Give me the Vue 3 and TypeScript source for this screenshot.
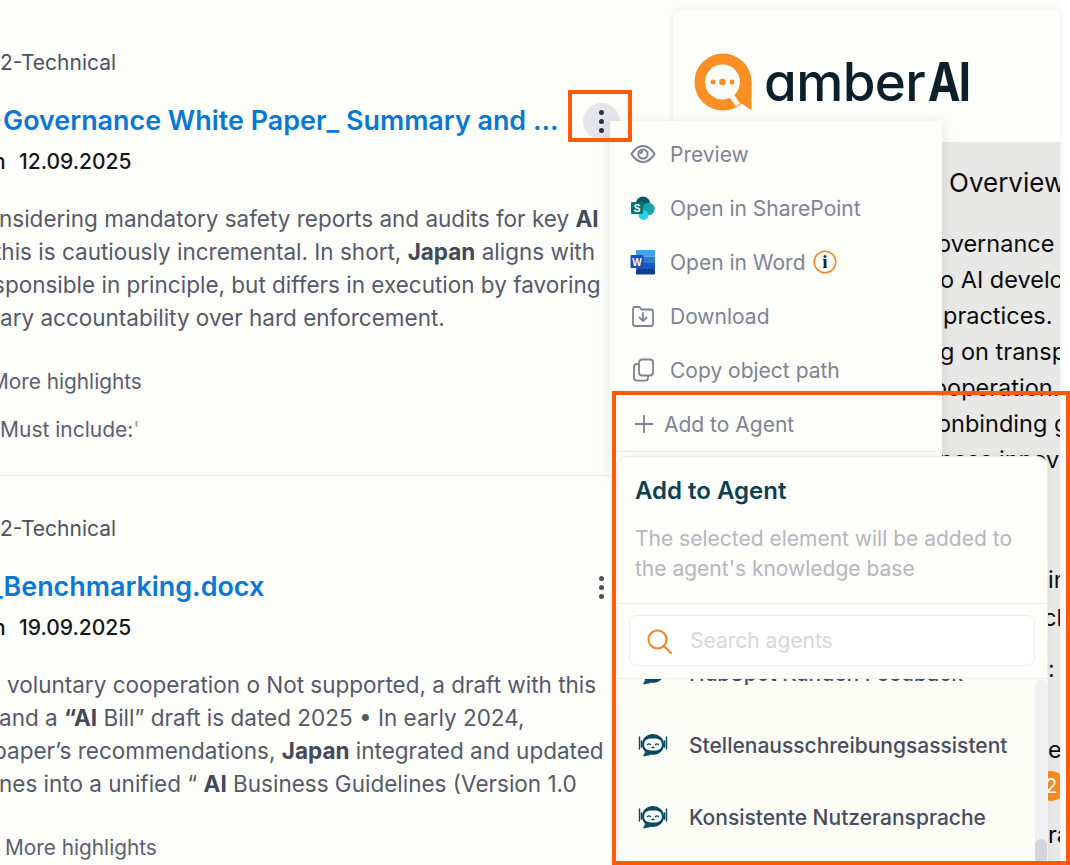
<script setup lang="ts">
interface Seg { t: string; b?: boolean }
interface Line { x: number; segs: Seg[] }
interface Result {
  title: string; titleX: number; date: string; active: boolean
  lines: Line[]; moreX: number; must: boolean
}

const results: Result[] = [
  {
    title: 'Governance White Paper_ Summary and ...', titleX: 3, date: '12.09.2025', active: true,
    lines: [
      { x: -1, segs: [{ t: 'nsidering mandatory safety reports and audits for key ' }, { t: 'AI', b: true }] },
      { x: -6, segs: [{ t: 'this is cautiously incremental. In short, ' }, { t: 'Japan', b: true }, { t: ' aligns with' }] },
      { x: -7, segs: [{ t: 'sponsible in principle, but differs in execution by favoring' }] },
      { x: 0, segs: [{ t: 'ary accountability over hard enforcement.' }] },
    ],
    moreX: -10, must: true,
  },
  {
    title: '_Benchmarking.docx', titleX: -10, date: '19.09.2025', active: false,
    lines: [
      { x: 7, segs: [{ t: 'voluntary cooperation o Not supported, a draft with this' }] },
      { x: -1, segs: [{ t: 'and a ' }, { t: '“AI', b: true }, { t: ' Bill” draft is dated 2025 • In early 2024,' }] },
      { x: -7, segs: [{ t: 'paper’s recommendations, ' }, { t: 'Japan', b: true }, { t: ' integrated and updated' }] },
      { x: -1, segs: [{ t: 'nes into a unified “ ' }, { t: 'AI', b: true }, { t: ' Business Guidelines (Version 1.0' }] },
    ],
    moreX: 5, must: false,
  },
]

// x is measured from the left edge of the grey document area
const docLines = [
  { text: 'overnance T', x: 264, gap: 0 },
  { text: 'o AI develo', x: 267, gap: 0 },
  { text: 'practices.', x: 270, gap: 0 },
  { text: 'g on transp', x: 267, gap: 0 },
  { text: 'ooperation.', x: 260, gap: 0 },
  { text: 'onbinding g', x: 264, gap: 0 },
  { text: 'nces innov', x: 266, gap: 0 },
  { text: 'in', x: 375, gap: 84 },
  { text: 'ch', x: 370, gap: 2 },
  { text: ':', x: 375, gap: 15 },
  { text: 'e', x: 375, gap: 45 },
  { text: 'ra', x: 375, gap: 49 },
]

const agents = ['HubSpot Kunden Feedback', 'Stellenausschreibungsassistent', 'Konsistente Nutzeransprache']
</script>

<template>
  <div class="page">
    <main class="results">
      <article v-for="r in results" :key="r.date" class="result">
        <div class="meta">2-Technical</div>
        <div class="title-row">
          <a class="title" :style="{ marginLeft: r.titleX + 'px' }">{{ r.title }}</a>
          <button class="kebab" :class="{ active: r.active }" aria-label="More">
            <i></i><i></i><i></i>
          </button>
        </div>
        <div class="date"><span class="date-by">n</span>{{ r.date }}</div>
        <div class="snippet">
          <div v-for="(line, i) in r.lines" :key="i" class="line" :style="{ marginLeft: line.x + 'px' }">
            <template v-for="(s, j) in line.segs" :key="j"><b v-if="s.b">{{ s.t }}</b><template v-else>{{ s.t }}</template></template>
          </div>
        </div>
        <div class="more" :style="{ marginLeft: r.moreX + 'px' }">More highlights</div>
        <div v-if="r.must" class="must">Must include: <span class="must-cut">"</span></div>
      </article>
    </main>

    <aside class="preview">
      <div class="logo-bar">
        <svg class="logo-mark" width="58" height="58" viewBox="0 0 58 58">
          <circle cx="29" cy="29" r="28.500" fill="#f98f25" />
          <path d="M29 29H57.500V57.500L44 48z" fill="#f98f25" />
          <circle cx="28.500" cy="29" r="17.500" fill="#fdfef9" />
          <path d="M35 39l9 13" stroke="#fdfef9" stroke-width="5" />
          <circle cx="19" cy="29" r="2.500" fill="#f98f25" />
          <circle cx="28.500" cy="29" r="3.300" fill="#f98f25" />
          <circle cx="38" cy="29" r="2.500" fill="#f98f25" />
        </svg>
        <span class="logo-text">amber<b>AI</b></span>
      </div>
      <div class="doc">
        <div class="doc-title">Overview</div>
        <div
          v-for="(l, i) in docLines"
          :key="i"
          class="doc-line"
          :style="{ marginLeft: l.x + 'px', marginTop: l.gap + 'px' }"
        >{{ l.text }}</div>
        <span class="badge">2</span>
      </div>
    </aside>

    <div class="menu">
      <div class="menu-item">
        <svg class="mi" width="26" height="26" viewBox="0 0 26 26" fill="none" stroke="#7f8494" stroke-width="2">
          <path d="M1.500 13S5.800 5 13 5 24.500 13 24.500 13 20.200 21 13 21 1.500 13 1.500 13z" />
          <circle cx="13" cy="13" r="4.600" />
          <path d="M10.600 13a2.400 2.400 0 0 1 2.400-2.400" stroke-width="2.200" />
        </svg>
        Preview
      </div>
      <div class="menu-item">
        <svg class="mi" width="26" height="26" viewBox="0 0 26 26">
          <circle cx="13" cy="8.500" r="7" fill="#0b5a5c" />
          <circle cx="18.500" cy="14" r="6.200" fill="#17a3a8" />
          <circle cx="13.500" cy="20" r="5" fill="#24d6e6" />
          <rect x="1" y="7" width="12" height="12" rx="1" fill="#0a7377" />
          <text x="7" y="16.500" class="mi-letter" text-anchor="middle">S</text>
        </svg>
        Open in SharePoint
      </div>
      <div class="menu-item">
        <svg class="mi" width="26" height="26" viewBox="0 0 26 26">
          <rect x="6" y="1" width="19" height="6.500" rx="1" fill="#41a5ee" />
          <rect x="6" y="7.500" width="19" height="6.500" fill="#2b7cd3" />
          <rect x="6" y="14" width="19" height="6" fill="#185abd" />
          <rect x="6" y="20" width="19" height="5.500" rx="1" fill="#103f91" />
          <rect x="0.500" y="6" width="13" height="13" rx="1" fill="#1a4fb5" />
          <text x="7" y="16.500" class="mi-letter" text-anchor="middle">W</text>
        </svg>
        Open in Word
        <svg class="info" width="24" height="24" viewBox="0 0 24 24">
          <circle cx="12" cy="12" r="10.800" fill="none" stroke="#f58a2a" stroke-width="1.600" />
          <text x="12" y="18" class="info-i" text-anchor="middle">i</text>
        </svg>
      </div>
      <div class="menu-item">
        <svg class="mi" width="26" height="26" viewBox="0 0 26 26" fill="none" stroke="#7f8494" stroke-width="1.800" stroke-linejoin="round" stroke-linecap="round">
          <path d="M3 6.500C3 5 3.800 4 5 4h4.500l2 2.500H21c1.200 0 2 .8 2 2V21c0 1.200-.8 2-2 2H5c-1.200 0-2-.8-2-2z" />
          <path d="M13 10v8M9.500 14.500 13 18l3.500-3.500" />
        </svg>
        Download
      </div>
      <div class="menu-item">
        <svg class="mi" width="26" height="26" viewBox="0 0 26 26" fill="none" stroke="#7f8494" stroke-width="1.800" stroke-linejoin="round">
          <rect x="9" y="2.500" width="14" height="16" rx="3" />
          <path d="M9 7H7c-2 0-3 1.200-3 3v11c0 1.600 1 2.700 3 2.700h8c1.800 0 3-1.100 3-2.700v-2.500" />
        </svg>
        Copy object path
      </div>
      <div class="menu-item add">
        <svg class="plus" width="20" height="20" viewBox="0 0 20 20" stroke="#7f8494" stroke-width="1.800">
          <path d="M10 1v18M1 10h18" />
        </svg>
        Add to Agent
      </div>
    </div>

    <section class="popup">
      <h3 class="popup-title">Add to Agent</h3>
      <p class="popup-desc">The selected element will be added to the agent's knowledge base</p>
      <div class="search-wrap">
        <div class="search">
          <svg width="28" height="28" viewBox="0 0 28 28" fill="none" stroke="#f58a2a" stroke-width="2.200" stroke-linecap="round">
            <circle cx="12.500" cy="12.500" r="9" />
            <path d="M19 19l7 7" />
          </svg>
          <span class="placeholder">Search agents</span>
        </div>
      </div>
      <div class="list-wrap">
        <div class="list">
          <div v-for="a in agents" :key="a" class="agent">
            <svg width="30" height="24" viewBox="0 0 30 24">
              <path d="M1.500 4v12M28.500 4v12" stroke="#0b4a5e" stroke-width="1.400" stroke-linecap="round" />
              <path d="M3.500 8v6M26.500 8v6" stroke="#0b4a5e" stroke-width="1.600" stroke-linecap="round" />
              <ellipse cx="15" cy="11.500" rx="11" ry="10.500" fill="#0b4a5e" />
              <path d="M7 19l-2 4.500 8-1.500z" fill="#0b4a5e" />
              <rect x="6" y="5.500" width="18" height="12" rx="6" fill="#f4f7f7" />
              <path d="M9.500 11.500q1.500-1.300 3 0M17.500 11.500q1.500-1.300 3 0M14 14.500h2" fill="none" stroke="#0b4a5e" stroke-width="1.300" stroke-linecap="round" />
            </svg>
            <span>{{ a }}</span>
          </div>
        </div>
        <div class="scrollbar"><div class="thumb"></div></div>
      </div>
    </section>

    <div class="mark mark-kebab"></div>
    <div class="mark mark-popup"></div>
  </div>
</template>

<style scoped>
.page {
  position: relative;
  display: flex;
  width: 1060px;
  height: 865px;
  background: #fdfef9;
  font-family: Inter, "Liberation Sans", sans-serif;
}

.results {
  flex: 0 0 673px;
  width: 673px;
  height: 865px;
  padding-top: 10px;
  box-sizing: border-box;
  overflow: hidden;
}

.result {
  padding: 39px 0 31px;
  border-bottom: 1px solid #e6e7ea;
  width: 610px;
}

.result:last-child {
  border-bottom: 0;
}

.meta {
  font-size: 21px;
  line-height: 28px;
  color: #4c5261;
}

.title-row {
  display: flex;
  align-items: center;
  justify-content: space-between;
  height: 38px;
  margin-top: 24px;
  position: relative;
}

.title {
  font-size: 26.900px;
  font-weight: 600;
  line-height: 38px;
  color: #0a78d6;
  white-space: nowrap;
}

.kebab {
  position: absolute;
  left: 583px;
  top: 2px;
  display: flex;
  flex-direction: column;
  align-items: center;
  justify-content: center;
  gap: 4px;
  width: 37px;
  height: 37px;
  padding: 0;
  border: 0;
  border-radius: 50%;
  background: transparent;
}

.kebab.active {
  background: #e5e5ec;
}

.kebab i {
  width: 5px;
  height: 5px;
  border-radius: 50%;
  background: #2d3344;
}

.kebab:not(.active) i {
  background: #4c5261;
}

.date {
  margin-top: 9px;
  font-size: 21px;
  font-weight: 500;
  line-height: 28px;
  color: #15171c;
}

.date-by {
  display: inline-block;
  width: 26px;
  margin-left: -7px;
}

.snippet {
  margin-top: 26px;
  font-size: 22.500px;
  line-height: 33px;
  color: #545a69;
}

.line {
  white-space: nowrap;
}

.line b {
  font-weight: 700;
  color: #434958;
}

.more {
  margin-top: 34px;
  font-size: 20.800px;
  line-height: 28px;
  color: #5b6070;
}

.must {
  margin-top: 20px;
  font-size: 21px;
  line-height: 28px;
  color: #5b6070;
  white-space: nowrap;
}

.must-cut {
  display: inline-block;
  width: 5px;
  margin-left: -6px;
  overflow: hidden;
  vertical-align: bottom;
  color: #a0a3ad;
}

.preview {
  flex: 1;
  min-width: 0;
  margin-top: 10px;
  border-radius: 8px 0 0 0;
  box-shadow: 0 0 6px rgba(20, 25, 40, 0.08);
  overflow: hidden;
}

.logo-bar {
  display: flex;
  align-items: flex-start;
  gap: 12px;
  height: 132px;
  padding: 43px 0 0 21px;
  box-sizing: border-box;
}

.logo-mark {
  flex: none;
}

.logo-text {
  font-size: 53px;
  line-height: 58px;
  font-weight: 500;
  letter-spacing: -0.600px;
  white-space: nowrap;
  color: #0c1f2a;
  font-feature-settings: "cv11";
}

.logo-text b {
  display: inline-block;
  font-weight: 700;
  letter-spacing: -2px;
  margin-left: 3px;
  transform: scaleX(0.82);
  transform-origin: left center;
}

.doc {
  position: relative;
  height: 723px;
  background: #e8e8e6;
  color: #0b0b0d;
  font-size: 23.500px;
  line-height: 36px;
  overflow: hidden;
}

.doc-title {
  padding-top: 23px;
  padding-left: 276px;
  margin-bottom: 25px;
  white-space: nowrap;
  font-size: 26px;
  line-height: 36px;
}

.doc-line {
  white-space: nowrap;
  height: 36px;
}

.badge {
  position: absolute;
  left: 363px;
  top: 629px;
  width: 30px;
  height: 30px;
  border-radius: 50%;
  background: #f58a20;
  color: #fff;
  font-size: 20px;
  line-height: 30px;
  text-align: center;
}

.menu {
  position: absolute;
  left: 610px;
  top: 121px;
  width: 332px;
  padding: 6px 0 22px;
  background: #fdfef9;
  box-shadow: 0 2px 14px rgba(20, 25, 40, 0.1);
}

.menu-item {
  display: flex;
  align-items: center;
  height: 54px;
  padding-left: 20px;
  font-size: 21px;
  color: #7f8494;
}

.menu-item.add {
  box-sizing: border-box;
  height: 55px;
  margin-right: 6px;
  border-bottom: 1px solid #e6e7ea;
}

.mi {
  flex: none;
  margin-right: 14px;
}

.mi-letter {
  font-family: "Liberation Sans", sans-serif;
  font-size: 10px;
  font-weight: 700;
  fill: #fff;
}

.info {
  margin-left: 7px;
}

.info-i {
  font-family: "Liberation Serif", serif;
  font-size: 19px;
  font-weight: 700;
  fill: #14202c;
}

.plus {
  flex: none;
  margin: 0 10px 0 4px;
}

.popup {
  position: absolute;
  left: 618px;
  top: 457px;
  width: 429px;
  height: 408px;
  background: #fdfdf9;
  border-radius: 10px 10px 0 0;
  box-shadow: 0 0 0 1px #efefec, 0 0 8px rgba(20, 25, 40, 0.06);
  display: flex;
  flex-direction: column;
}

.popup-title {
  margin: 20px 17px 0;
  font-size: 24px;
  font-weight: 600;
  line-height: 28px;
  color: #0b4152;
}

.popup-desc {
  margin: 19px 17px 0;
  font-size: 21px;
  line-height: 30px;
  color: #b4b7c0;
}

.search-wrap {
  margin-top: 19px;
  padding: 11px 12px 12px 11px;
  border-top: 1px solid #eeeeec;
  border-bottom: 1px solid #eeeeec;
}

.search {
  display: flex;
  align-items: center;
  gap: 17px;
  height: 51px;
  padding-left: 15px;
  box-sizing: border-box;
  background: #fff;
  border: 1px solid #eeeff0;
  border-radius: 8px;
}

.placeholder {
  font-size: 21px;
  color: #d6d7dd;
}

.list-wrap {
  position: relative;
  flex: 1;
  min-height: 0;
  overflow: hidden;
  background: #fcfcf7;
}

.list {
  margin-top: -42px;
  padding-left: 20px;
}

.agent {
  display: flex;
  align-items: center;
  gap: 21px;
  height: 72px;
  font-size: 21px;
  font-weight: 500;
  color: #474d5e;
  white-space: nowrap;
}

.scrollbar {
  position: absolute;
  right: 0;
  top: 1px;
  bottom: 0;
  width: 12px;
  border-radius: 6px;
  background: #eff0f2;
}

.thumb {
  position: absolute;
  left: 0;
  right: 0;
  top: 159px;
  bottom: 0;
  border-radius: 6px;
  background: #d3d4da;
}

.mark {
  position: absolute;
  border-style: solid;
  border-color: #ff5a0a;
  box-sizing: border-box;
  pointer-events: none;
}

.mark-kebab {
  left: 568px;
  top: 90px;
  width: 64px;
  height: 52px;
  border-width: 4px;
}

.mark-popup {
  left: 612px;
  top: 391px;
  width: 458px;
  height: 474px;
  border-width: 4px;
}
</style>

<style>
html, body {
  background: #fff;
  overflow: hidden;
}
</style>
